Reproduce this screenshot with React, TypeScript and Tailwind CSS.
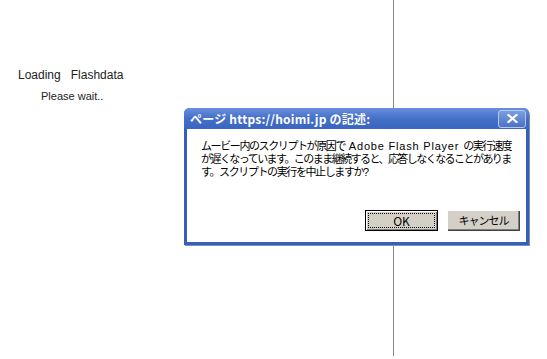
export default function App() {
  return (
    <div className="relative w-[547px] h-[359px] bg-white overflow-hidden" style={{ fontFamily: '"Liberation Sans", Arial, sans-serif' }}>
      <div className="flex">
        <div className="w-[394px] h-[356px] border-r border-[#8a8a8a] pt-[67px]">
          <div className="pl-[18px] text-[12px] text-[#222] leading-[16px]">Loading&nbsp;&nbsp; Flashdata</div>
          <div className="pl-[41px] pt-[6px] text-[11px] text-[#222] leading-[14px]">Please wait..</div>
        </div>
      </div>

      <div
        className="absolute left-[184px] top-[108px] w-[345px] h-[137px] flex flex-col rounded-t-[6px] bg-[#3560b8] p-[3px] pt-0 shadow-[1px_1px_0_#7b8fb8]"
        style={{ fontFamily: '"Noto Sans CJK JP", "Liberation Sans", sans-serif' }}
      >
        <div className="h-[21px] flex items-center justify-between bg-gradient-to-b from-[#6a8fdc] via-[#4470c8] to-[#3a65c0] rounded-t-[5px] -mx-[3px] pl-[6px] pr-[3px]">
          <span className="text-white font-bold text-[12px] leading-none tracking-[0.2px]">ページ https://hoimi.jp の記述:</span>
          <div className="w-[28px] h-[18px] rounded-[3px] border border-[#b9c8ea] bg-gradient-to-b from-[#7c9de0] to-[#4a72c8] flex items-center justify-center">
            <svg width="11" height="9" viewBox="0 0 11 9">
              <path d="M1.5 1 L9.5 8 M9.5 1 L1.5 8" stroke="white" strokeWidth="2.2" strokeLinecap="square" />
            </svg>
          </div>
        </div>
        <div className="flex-1 bg-white flex flex-col pl-[14px] pr-[6px] pt-[11px] pb-[11px]">
          <div
            className="text-[11px] leading-[13px] text-black tracking-[-1.4px] whitespace-nowrap"
            style={{ fontFamily: '"Liberation Sans", "Noto Sans CJK JP", sans-serif' }}
          >
            <div>
              ムービー内のスクリプトが原因で<span className="tracking-[0.8px]">&nbsp;Adobe Flash Player&nbsp;</span>の実行速度
            </div>
            <div className="tracking-[-1.55px]">が遅くなっています。このまま継続すると、応答しなくなることがありま</div>
            <div>す。スクリプトの実行を中止しますか?</div>
          </div>
          <div className="mt-auto flex justify-end gap-[9px]">
            <button className="w-[73px] h-[21px] bg-[#d4d0c8] text-[12px] text-black leading-none border border-black outline outline-1 outline-dotted outline-offset-[-4px] outline-black shadow-[inset_1px_1px_0_#fff,inset_-1px_-1px_0_#808080]">
              OK
            </button>
            <button className="w-[73px] h-[21px] bg-[#d4d0c8] text-[11px] text-black leading-none tracking-[-1px] shadow-[inset_1px_1px_0_#fff,inset_-1px_-1px_0_#404040,inset_-2px_-2px_0_#808080]">
              キャンセル
            </button>
          </div>
        </div>
      </div>
    </div>
  );
}
